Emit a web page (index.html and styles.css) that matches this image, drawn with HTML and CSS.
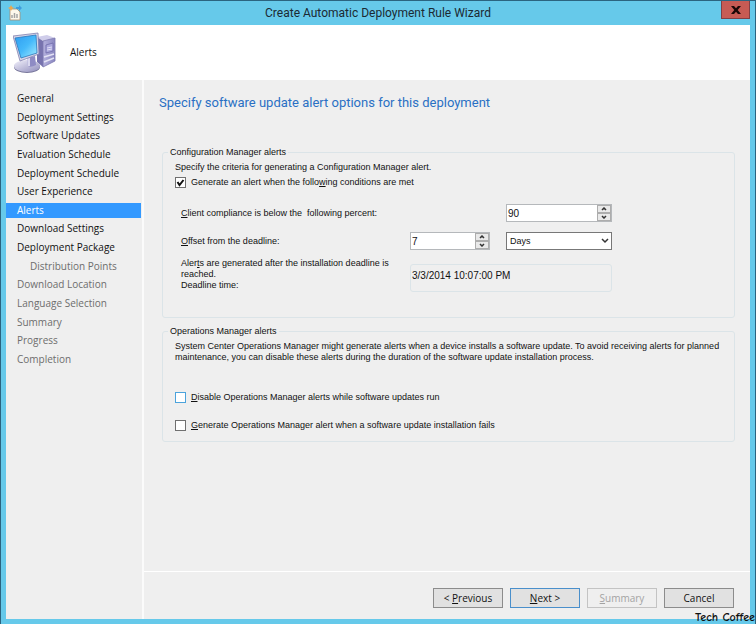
FILE: index.html
```html
<!DOCTYPE html>
<html lang="en">
<head>
    <meta charset="UTF-8">
    <meta name="viewport" content="width=device-width, initial-scale=1.0">
    <title>Create Automatic Deployment Rule Wizard</title>
    <link rel="stylesheet" href="styles.css">
</head>
<body>
    <div class="window">
        <header class="titlebar">
            <svg class="app-icon" viewBox="0 0 14 16" width="14" height="16">
                <path d="M2 4h7l3 3v8H2z" fill="#fdf8ec" stroke="#a98e72" stroke-width=".8"/>
                <path d="M4 13v-3M6.500 13V8M9 13V9" stroke="#a5a5a5" stroke-width="1.500"/>
                <path d="M0 3l2-1 1-2 1 2 2 1-2 1-1 2-1-2z" fill="#eda74b"/>
                <path d="M8 2h3V0l3 3-3 3V4H8z" fill="#3e9ddd"/>
            </svg>
            <h1 class="title">Create Automatic Deployment Rule Wizard</h1>
            <button class="close" type="button" aria-label="Close">
                <svg viewBox="0 0 10 8" width="10" height="8">
                    <path d="M0 0h3l2 2.300L7 0h3L6.700 4 10 8H7L5 5.700 3 8H0l3.300-4z" fill="#1c0908"/>
                </svg>
            </button>
        </header>

        <div class="banner">
            <svg class="computer" viewBox="0 0 44 42" width="44" height="42">
                <defs>
                    <linearGradient id="screen" x1="0" y1="0" x2="1" y2="1">
                        <stop offset="0" stop-color="#2f9df0"/>
                        <stop offset=".5" stop-color="#45b9fa"/>
                        <stop offset="1" stop-color="#a4ecff"/>
                    </linearGradient>
                    <linearGradient id="metal" x1="0" y1="0" x2="1" y2="1">
                        <stop offset="0" stop-color="#f2f1fb"/>
                        <stop offset="1" stop-color="#8f8cbc"/>
                    </linearGradient>
                    <linearGradient id="tower" x1="0" y1="0" x2="1" y2="0">
                        <stop offset="0" stop-color="#b4b1de"/>
                        <stop offset="1" stop-color="#8a87c0"/>
                    </linearGradient>
                </defs>
                <path d="M24 5l10-2 8 3-12 3z" fill="#cfcdea"/>
                <path d="M24 5l6 4v26l-6-5z" fill="#7773ae"/>
                <path d="M30 9l12-3v23l-12 6z" fill="url(#tower)" stroke="#7c79b0" stroke-width=".8"/>
                <path d="M33 13l7-2v8l-7 2z" fill="#aba8dd" stroke="#6f6ba9" stroke-width=".8"/>
                <path d="M34 16l5-1M34 18l5-1" stroke="#dfddf6"/>
                <path d="M31 25l10-3M31 30l10-4" stroke="#e4e3f5" stroke-width="1.500"/>
                <ellipse cx="14" cy="35" rx="13" ry="6" fill="#77769a"/>
                <ellipse cx="14" cy="34" rx="13" ry="6" fill="url(#metal)"/>
                <path d="M14 26l8-2 1 9q-5 3-8 1z" fill="#8e8bc4"/>
                <path d="M14 26l3-1v9l-2 0z" fill="#d9d8ef"/>
                <path d="M0 4L25 1l1 21-19 7z" fill="#d6d5e8" stroke="#8280ae" stroke-width=".8"/>
                <path d="M2 6l21-3 1 18-16 5z" fill="url(#screen)" stroke="#2a79bd" stroke-width=".8"/>
            </svg>
            <span>Alerts</span>
        </div>

        <div class="body">
            <nav class="steps">
                <a href="#">General</a>
                <a href="#">Deployment Settings</a>
                <a href="#">Software Updates</a>
                <a href="#">Evaluation Schedule</a>
                <a href="#">Deployment Schedule</a>
                <a href="#">User Experience</a>
                <a href="#" class="current">Alerts</a>
                <a href="#">Download Settings</a>
                <a href="#">Deployment Package</a>
                <a href="#" class="todo sub">Distribution Points</a>
                <a href="#" class="todo">Download Location</a>
                <a href="#" class="todo">Language Selection</a>
                <a href="#" class="todo">Summary</a>
                <a href="#" class="todo">Progress</a>
                <a href="#" class="todo">Completion</a>
            </nav>

            <form class="main">
                <div class="content">
                    <h2>Specify software update alert options for this deployment</h2>

                    <fieldset class="group config">
                        <legend>Configuration Manager alerts</legend>
                        <p>Specify the criteria for generating a Configuration Manager alert.</p>
                        <label class="check"><input type="checkbox" checked> <span>Generate an alert when the follo<u>w</u>ing conditions are met</span></label>

                        <div class="fields">
                            <label class="wide-label" for="percent"><u>C</u>lient compliance is below the&nbsp; following percent:</label>
                            <div class="spinner">
                                <input type="text" id="percent" value="90">
                                <div class="arrows">
                                    <button type="button" aria-label="Increase percent"><svg viewBox="0 0 6 4" width="6" height="4"><path d="M1 3l2-2 2 2"/></svg></button>
                                    <button type="button" aria-label="Decrease percent"><svg viewBox="0 0 6 4" width="6" height="4"><path d="M1 1l2 2 2-2"/></svg></button>
                                </div>
                            </div>

                            <label for="offset"><u>O</u>ffset from the deadline:</label>
                            <div class="spinner">
                                <input type="text" id="offset" value="7">
                                <div class="arrows">
                                    <button type="button" aria-label="Increase offset"><svg viewBox="0 0 6 4" width="6" height="4"><path d="M1 3l2-2 2 2"/></svg></button>
                                    <button type="button" aria-label="Decrease offset"><svg viewBox="0 0 6 4" width="6" height="4"><path d="M1 1l2 2 2-2"/></svg></button>
                                </div>
                            </div>
                            <div class="select">
                                <select aria-label="Offset unit">
                                    <option>Days</option>
                                    <option>Weeks</option>
                                    <option>Months</option>
                                </select>
                                <svg viewBox="0 0 8 6" width="8" height="6"><path d="M1 1l3 3 3-3"/></svg>
                            </div>

                            <div class="note">Aler<u>t</u>s are generated after the installation deadline is<br>reached.<br>Deadline time:</div>
                            <output class="deadline">3/3/2014 10:07:00 PM</output>
                        </div>
                    </fieldset>

                    <fieldset class="group operations">
                        <legend>Operations Manager alerts</legend>
                        <p>System Center Operations Manager might generate alerts when a device installs a software update. To avoid receiving alerts for planned maintenance, you can disable these alerts during the duration of the software update installation process.</p>
                        <div class="options">
                            <label class="check"><input type="checkbox" class="hot"> <span><u>D</u>isable Operations Manager alerts while software updates run</span></label>
                            <label class="check"><input type="checkbox"> <span><u>G</u>enerate Operations Manager alert when a software update installation fails</span></label>
                        </div>
                    </fieldset>
                </div>

                <footer class="actions">
                    <button type="button">&lt; <u>P</u>revious</button>
                    <button type="button" class="default"><u>N</u>ext &gt;</button>
                    <button type="button" disabled><u>S</u>ummary</button>
                    <button type="button">Cancel</button>
                </footer>
            </form>
        </div>
        <div class="watermark">Tech Coffee</div>
    </div>
</body>
</html>
```
FILE: styles.css
```css
* {
    box-sizing: border-box;
}
body {
    margin: 0;
    font-family: "Liberation Sans", Arial, sans-serif;
    font-size: 9px;
    line-height: 11px;
    color: #111;
}
.window {
    position: relative;
    display: flex;
    flex-direction: column;
    min-height: 100vh;
    padding: 0 5px 5px;
    background: #66c9ea;
    border: 1px solid #2b6480;
    border-bottom-width: 0;
    overflow: hidden;
}
.titlebar {
    display: grid;
    grid-template-columns: 40px 1fr 40px;
    align-items: center;
    height: 24px;
}
.app-icon {
    margin-left: 2px;
}
.title {
    margin: 0;
    text-align: center;
    font: 12px Roboto, "Segoe UI", sans-serif;
    color: #1b2a33;
}
.close {
    align-self: start;
    justify-self: end;
    display: flex;
    align-items: center;
    justify-content: center;
    width: 29px;
    height: 18px;
    padding: 0;
    background: #c75b54;
    border: 1px solid #823f45;
    border-top: 0;
}
.banner {
    display: flex;
    align-items: center;
    gap: 13px;
    height: 55px;
    padding-left: 7px;
    background: #fff;
    font-family: "Open Sans", "Segoe UI", sans-serif;
    font-size: 10px;
}
.body {
    flex: 1;
    display: grid;
    grid-template-columns: 136px 1fr;
    background: #efefef;
}

/* wizard steps */
.steps {
    display: grid;
    align-content: space-between;
    align-self: start;
    min-height: 276px;
    margin-top: 11px;
    font-family: "Open Sans", "Segoe UI", sans-serif;
    font-size: 10px;
    line-height: 15px;
}
.steps a {
    padding-left: 11px;
    margin-right: 1px;
    color: #111;
    text-decoration: none;
    white-space: nowrap;
}
.steps .current {
    background: #3399ff;
    color: #fff;
}
.steps .todo {
    color: #6d6d6d;
}
.steps .sub {
    padding-left: 24px;
}

.main {
    display: flex;
    flex-direction: column;
    border-left: 2px solid #fbfbfb;
}
.content {
    flex: 1;
    padding: 14px 15px 0 18px;
}
h2 {
    margin: 0 0 35px -3px;
    font: 13px/18px Roboto, Arial, sans-serif;
    color: #2a70c4;
}
.group {
    margin: 0 0 8px;
    padding: 4px 12px 0;
    border: 1px solid #dbe4e8;
    border-radius: 3px;
}
.group legend {
    margin-left: -7px;
    padding: 0 2px;
}
.group p {
    margin: 0;
}
.config {
    padding-bottom: 25px;
}
.operations {
    padding-bottom: 10px;
}
.check {
    display: flex;
    align-items: center;
    gap: 5px;
}
.check input {
    appearance: none;
    width: 11px;
    height: 11px;
    margin: 0;
    background: #fff;
    border: 1px solid #707070;
}
.check input:checked {
    background: #fff url("data:image/svg+xml,%3Csvg xmlns='http://www.w3.org/2000/svg' viewBox='0 0 9 9'%3E%3Cpath d='M1.500 4l2 3 4-5' fill='none' stroke='%23111' stroke-width='2'/%3E%3C/svg%3E");
}
.check input.hot,
.check input:hover {
    border-color: #4ba3dc;
}
.config .check {
    margin-top: 4px;
}
.options {
    display: grid;
    gap: 17px;
    margin-top: 29px;
}

.fields {
    display: grid;
    grid-template-columns: 213px 80px 106px;
    grid-template-rows: 28px 28px auto;
    column-gap: 16px;
    align-items: center;
    padding: 11px 0 0 6px;
}
.wide-label {
    grid-column: span 2;
}
.spinner {
    display: flex;
    height: 18px;
    background: #fff;
    border: 1px solid #b5b8bb;
}
.spinner input {
    flex: 1;
    min-width: 0;
    padding: 0 1px;
    border: 0;
    background: none;
    font: inherit;
    font-size: 10px;
    color: inherit;
}
.arrows {
    display: grid;
    width: 14px;
}
.arrows button {
    display: flex;
    align-items: center;
    justify-content: center;
    padding: 0;
    background: #e9e9e9;
    border: 1px solid #adadad;
}
.arrows path,
.select path {
    fill: none;
    stroke: #333;
    stroke-width: 1.5;
}
.select {
    display: grid;
    align-items: center;
}
.select select,
.select svg {
    grid-area: 1 / 1;
}
.select select {
    appearance: none;
    width: 100%;
    height: 18px;
    padding: 0 3px;
    background: #fff;
    border: 1px solid #777;
    border-radius: 0;
    font: inherit;
    font-size: 9px;
    color: inherit;
}
.select svg {
    justify-self: end;
    margin-right: 3px;
    pointer-events: none;
}
.note {
    align-self: start;
    padding-top: 3px;
}
.deadline {
    grid-column: span 2;
    height: 28px;
    margin-top: 9px;
    padding: 5px 1px;
    border: 1px solid #dbe4e8;
    border-radius: 3px;
    font-size: 10px;
}

.actions {
    display: flex;
    justify-content: flex-end;
    gap: 7px;
    padding: 16px 16px 11px;
    border-top: 1px solid #fff;
}
.actions button {
    width: 70px;
    height: 20px;
    padding: 0;
    background: #e1e1e1;
    border: 1px solid #8c8c8c;
    font: 10px "Open Sans", "Segoe UI", sans-serif;
    color: #111;
}
.actions button.default {
    border-color: #4a8fcb;
}
.actions button:disabled {
    background: #efefef;
    border-color: #c3c3c3;
    color: #a3a3a3;
}
.watermark {
    position: absolute;
    right: 0;
    bottom: 0;
    font: bold 12px/14px "Comic Sans MS", "Comic Neue", "Noto Sans", sans-serif;
    color: #111;
}
```
